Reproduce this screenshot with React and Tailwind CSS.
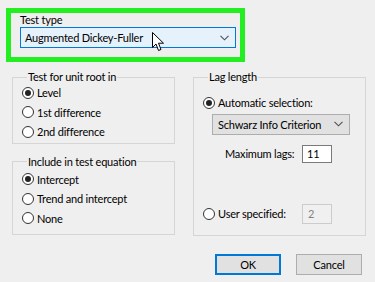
import React from 'react';

const font = { fontFamily: 'Lato, "Liberation Sans", Arial, sans-serif' };

function Chevron({ className }) {
    return (
        <svg width="9" height="6" viewBox="0 0 9 6" className={className}>
            <path d="M0.5 0.8 L4.5 4.8 L8.5 0.8" fill="none" stroke="#505050" strokeWidth="1.1" />
        </svg>
    );
}

function Radio({ label, checked }) {
    return (
        <div className="flex h-[19.5px] items-center gap-[3px] whitespace-nowrap">
            <span className="flex h-[12px] w-[12px] shrink-0 items-center justify-center rounded-full border border-[#333] bg-white">
                {checked && <span className="h-[6px] w-[6px] rounded-full bg-[#222]" />}
            </span>
            <span className="text-[11px] leading-none text-black">{label}</span>
        </div>
    );
}

function Group({ title, className, children }) {
    return (
        <fieldset className={`border border-[#d5d5d5] ${className}`}>
            <legend className="ml-[5px] whitespace-nowrap px-[1px] text-[11px] leading-[12px] text-black">{title}</legend>
            {children}
        </fieldset>
    );
}

function Cursor() {
    return (
        <svg width="13" height="20" viewBox="0 0 13 20" className="absolute left-[152px] top-[32px]">
            <path
                d="M0.5 0.5 L0.5 15.5 L4 12 L6.5 18.5 L9 17.5 L6.5 11.2 L11.5 11.2 Z"
                fill="white"
                stroke="black"
                strokeWidth="1"
                strokeLinejoin="round"
            />
        </svg>
    );
}

export default function App() {
    return (
        <div className="relative h-[282px] w-[375px] overflow-hidden bg-[#efefef] tracking-[-0.2px]" style={font}>
            <div className="pl-[6px] pt-[8px]">
                <div className="h-[54px] w-[239px] border-[5px] border-[#22ee22] pl-[9px] pr-[4px]">
                    <div className="h-[14px] text-[11px] leading-[14px] text-black">Test type</div>
                    <div className="flex h-[21px] w-[216px] items-center justify-between border border-[#0078d7] bg-[#e5f1fb] pl-[4px] pr-[6px]">
                        <span className="text-[11px] leading-none text-black">Augmented Dickey-Fuller</span>
                        <Chevron />
                    </div>
                </div>
            </div>

            <div className="mt-[9px] flex pl-[12px]">
                <div className="flex w-[163px] flex-col">
                    <Group title="Test for unit root in" className="pb-[1px] pl-[9px]">
                        <Radio label="Level" checked />
                        <Radio label="1st difference" />
                        <Radio label="2nd difference" />
                    </Group>
                    <Group title="Include in test equation" className="mt-[12px] pb-[6px] pl-[9px] pt-[2px]">
                        <Radio label="Intercept" checked />
                        <Radio label="Trend and intercept" />
                        <Radio label="None" />
                    </Group>
                </div>

                <Group title="Lag length" className="ml-[18px] h-[165px] w-[173px] pl-[9px] pt-[10px]">
                    <Radio label="Automatic selection:" checked />
                    <div className="ml-[9px] mt-[1px] flex h-[21px] w-[138px] items-center justify-between border border-[#adadad] bg-[#e1e1e1] pl-[5px] pr-[6px]">
                        <span className="whitespace-nowrap text-[11px] leading-none text-black">Schwarz Info Criterion</span>
                        <Chevron />
                    </div>
                    <div className="mt-[10px] flex h-[18px] items-center">
                        <span className="ml-[22px] w-[77px] whitespace-nowrap text-[11px] leading-none text-black">Maximum lags:</span>
                        <div className="flex h-[18px] w-[30px] items-center border border-[#7a7a7a] bg-white pl-[4px] text-[11px] leading-none text-black">
                            11
                        </div>
                    </div>
                    <div className="mt-[41px] flex h-[20px] items-center">
                        <div className="w-[99px]">
                            <Radio label="User specified:" />
                        </div>
                        <div className="flex h-[20px] w-[30px] items-center border border-[#cccccc] bg-[#f0f0f0] pl-[5px] text-[11px] leading-none text-[#838383]">
                            2
                        </div>
                    </div>
                </Group>
            </div>

            <div className="mt-[18px] flex justify-end gap-[15px] pr-[13px]">
                <button className="h-[21px] w-[66px] border-2 border-[#0078d7] bg-[#e1e1e1] text-[11px] leading-none text-black">
                    OK
                </button>
                <button className="h-[21px] w-[66px] border border-[#adadad] bg-[#e1e1e1] text-[11px] leading-none text-black">
                    Cancel
                </button>
            </div>

            <Cursor />
        </div>
    );
}
